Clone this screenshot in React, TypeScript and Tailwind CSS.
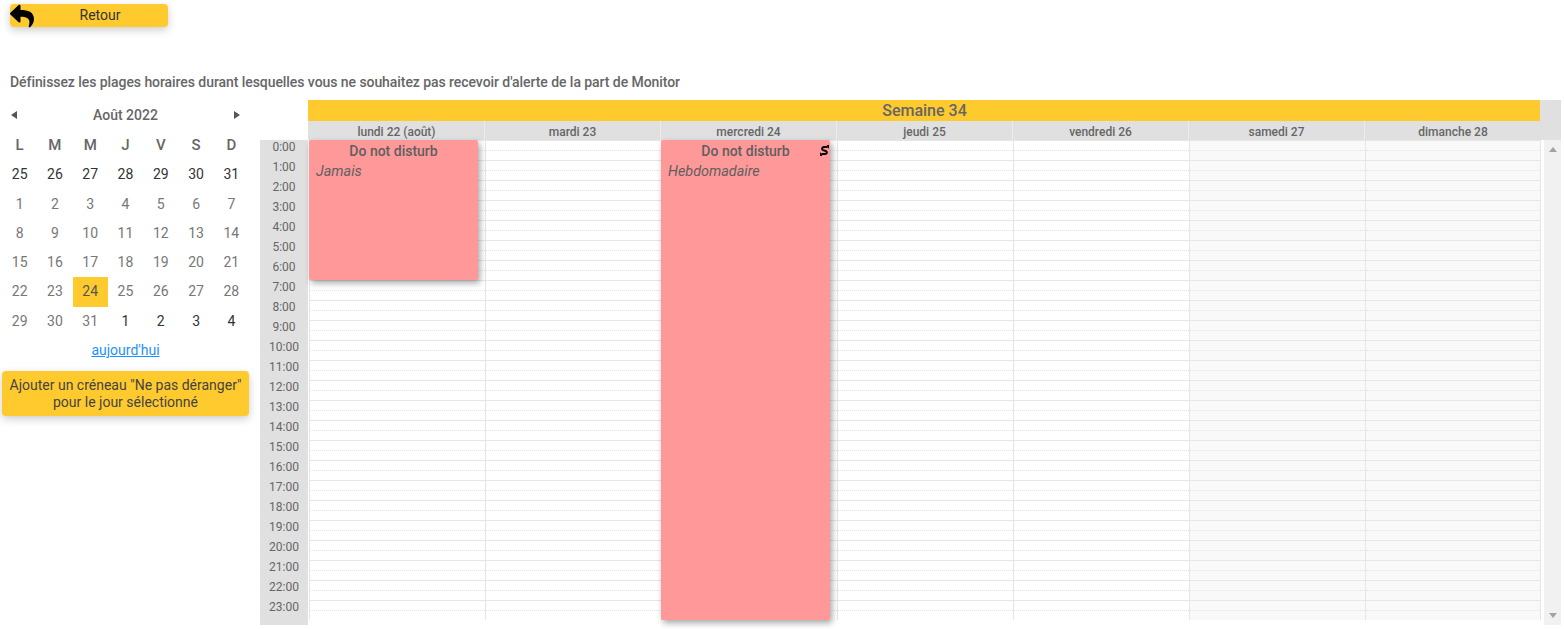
import { FaReply } from "react-icons/fa";

const days = [
  { label: "lundi 22 (août)", weekend: false },
  { label: "mardi 23", weekend: false },
  { label: "mercredi 24", weekend: false },
  { label: "jeudi 25", weekend: false },
  { label: "vendredi 26", weekend: false },
  { label: "samedi 27", weekend: true },
  { label: "dimanche 28", weekend: true },
];

const hours = Array.from({ length: 24 }, (_, i) => i);

const weeks = [
  [25, 26, 27, 28, 29, 30, 31],
  [1, 2, 3, 4, 5, 6, 7],
  [8, 9, 10, 11, 12, 13, 14],
  [15, 16, 17, 18, 19, 20, 21],
  [22, 23, 24, 25, 26, 27, 28],
  [29, 30, 31, 1, 2, 3, 4],
];

function RepeatIcon() {
  return (
    <svg viewBox="0 0 10 12" className="absolute top-[5px] right-[1px] w-[9px] h-[11px]" fill="none">
      <path d="M8.5 2.2H4.6C2 2.2 1.6 4.6 3.4 5.6L6.6 6.6C8.4 7.4 8 9.8 5.4 9.8H1.5" stroke="#000" strokeWidth="2.2" />
      <path d="M7.5 0L10 0V4.5Z M2.5 12L0 12V7.5Z" fill="#000" />
    </svg>
  );
}

function MiniCalendar() {
  return (
    <div className="w-[247px] ml-[2px]">
      <div className="flex items-center justify-between h-[31px] pb-[1px] px-[9px] text-[14px] text-[#666]">
        <span className="w-0 h-0 border-y-[4px] border-y-transparent border-r-[6px] border-r-[#555]" />
        <span className="font-medium">Août 2022</span>
        <span className="w-0 h-0 border-y-[4px] border-y-transparent border-l-[6px] border-l-[#555]" />
      </div>
      <div className="grid grid-cols-7 text-center text-[14px] leading-[29.3px]">
        {["L", "M", "M", "J", "V", "S", "D"].map((d, i) => (
          <div key={i} className="font-medium text-[#666] text-[15px]">
            {d}
          </div>
        ))}
        {weeks.map((week, w) =>
          week.map((d, i) => {
            const outside = (w === 0 && d > 20) || (w === 5 && d < 10);
            const selected = w === 4 && d === 24;
            return (
              <div
                key={`${w}-${i}`}
                className={
                  selected
                    ? "bg-[#ffca2e] text-[#555]"
                    : outside
                      ? "text-[#333]"
                      : "text-[#777]"
                }
              >
                {d}
              </div>
            );
          }),
        )}
      </div>
      <div className="text-center mt-[3px] h-[22px] leading-[22px] text-[14px]">
        <a href="#" className="text-[#1e90ff] underline">
          aujourd'hui
        </a>
      </div>
      <button className="block w-full h-[45px] mt-[10px] rounded-[4px] bg-[#ffca2e] text-[14px] leading-[17px] text-[#444] text-center shadow-[0_3px_8px_rgba(0,0,0,0.2)]">
        Ajouter un créneau "Ne pas déranger"
        <br />
        pour le jour sélectionné
      </button>
    </div>
  );
}

function EventCard({ recurrence, repeat, height }: { recurrence: string; repeat?: boolean; height: string }) {
  return (
    <div
      className={`absolute top-0 -left-[1px] w-[169px] ${height} z-10 bg-[#ff9999] rounded-[2px] shadow-[2px_3px_6px_rgba(0,0,0,0.35)] text-[#5f5f5f]`}
    >
      <div className="text-center text-[14px] font-medium leading-[22px]">Do not disturb</div>
      {repeat && <RepeatIcon />}
      <div className="pl-[7px] pt-[1px] text-[14.4px] italic leading-[18px]">{recurrence}</div>
    </div>
  );
}

function WeekView() {
  return (
    <div className="w-[1301px] ml-[1px] relative">
      <div className="flex">
        <div className="w-[48px] shrink-0" />
        <div className="w-[1232px] shrink-0">
          <div className="h-[21px] pl-[1px] bg-[#ffca2e] text-center text-[16px] font-medium leading-[21px] text-[#666]">
            Semaine 34
          </div>
          <div className="flex h-[19px] pl-[1px] bg-[#e0e0e0]">
            {days.map((d, i) => (
              <div
                key={d.label}
                className={`w-[176px] shrink-0 text-center text-[12px] font-medium leading-[22px] text-[#666] ${i < 6 ? "border-r border-[#ececec]" : ""}`}
              >
                {d.label}
              </div>
            ))}
          </div>
        </div>
        <div className="w-[21px] shrink-0 bg-[#e0e0e0]" />
      </div>
      <div className="flex">
        <div className="w-[48px] h-[485px] shrink-0 pt-[1px] bg-[#e0e0e0]">
          {hours.map((h) => (
            <div key={h} className="h-[20px] text-center text-[12px] leading-[12px] text-[#666]">
              {h}:00
            </div>
          ))}
        </div>
        <div className="flex w-[1236px] h-[480px] shrink-0 pl-[1px] pr-[3px]">
          {days.map((d, i) => (
            <div
              key={d.label}
              className={`relative w-[176px] shrink-0 border-l border-[#e6e6e6] ${i === 6 ? "border-r" : ""} ${d.weekend ? "bg-[#f9f9f9]" : "bg-white"}`}
            >
              {hours.map((h) => (
                <div key={h} className="h-[20px] border-t border-[#e6e6e6]">
                  <div className="h-[10px] border-b border-dotted border-[#e4e4e4]" />
                </div>
              ))}
              {i === 0 && <EventCard recurrence="Jamais" height="h-[140px]" />}
              {i === 2 && <EventCard recurrence="Hebdomadaire" repeat height="h-[480px]" />}
            </div>
          ))}
        </div>
        <div className="w-[17px] h-[485px] shrink-0 bg-[#f1f1f1] flex flex-col items-center justify-between pt-[7px] pb-[7px]">
          <span className="w-0 h-0 border-x-[4px] border-x-transparent border-b-[5px] border-b-[#a3a3a3]" />
          <span className="w-0 h-0 border-x-[4px] border-x-transparent border-t-[5px] border-t-[#a3a3a3]" />
        </div>
      </div>
    </div>
  );
}

export default function App() {
  return (
    <div className="w-[1564px] h-[629px] overflow-hidden bg-white font-['Roboto',sans-serif]">
      <div className="pt-[4px] pl-[10px]">
        <button className="relative block w-[158px] h-[23px] pl-[22px] rounded-[4px] bg-[#ffca2e] text-[14px] text-[#333] shadow-[0_3px_8px_rgba(0,0,0,0.2)]">
          <FaReply preserveAspectRatio="none" className="absolute left-0 -top-[1px] w-[24px] h-[26px] text-black" />
          Retour
        </button>
      </div>
      <p className="mt-[45px] ml-[10px] text-[14px] leading-[20px] font-medium tracking-[-0.064px] text-[#666]">
        Définissez les plages horaires durant lesquelles vous ne souhaitez pas recevoir d'alerte de la part de Monitor
      </p>
      <div className="flex mt-[8px]">
        <div className="w-[259px] shrink-0">
          <MiniCalendar />
        </div>
        <WeekView />
      </div>
    </div>
  );
}
